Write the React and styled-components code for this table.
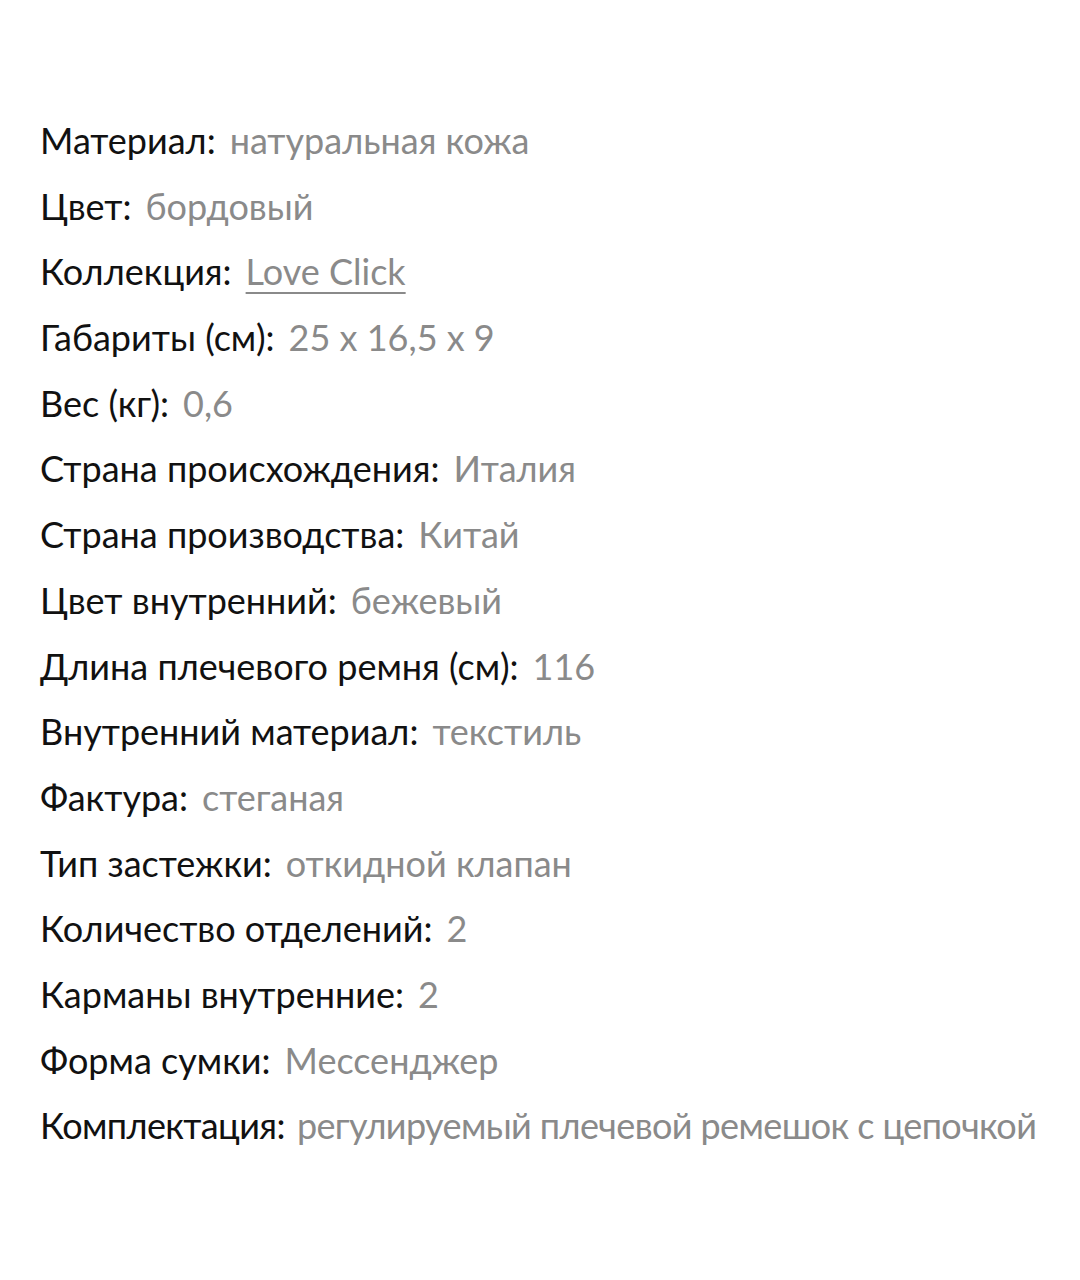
import React from "react";
import styled, { createGlobalStyle } from "styled-components";

const GlobalStyle = createGlobalStyle`
  body {
    margin: 0;
    background: #fff;
    font-family: "Lato", "Noto Sans", sans-serif;
  }
`;

const specs = [
  ["Материал", "натуральная кожа"],
  ["Цвет", "бордовый"],
  ["Коллекция", "Love Click", true],
  ["Габариты (см)", "25 x 16,5 x 9"],
  ["Вес (кг)", "0,6"],
  ["Страна происхождения", "Италия"],
  ["Страна производства", "Китай"],
  ["Цвет внутренний", "бежевый"],
  ["Длина плечевого ремня (см)", "116"],
  ["Внутренний материал", "текстиль"],
  ["Фактура", "стеганая"],
  ["Тип застежки", "откидной клапан"],
  ["Количество отделений", "2"],
  ["Карманы внутренние", "2"],
  ["Форма сумки", "Мессенджер"],
  ["Комплектация", "регулируемый плечевой ремешок с цепочкой", false, true],
];

const App = () => {
  return (
    <Wrapper>
      <GlobalStyle />
      <List>
        {specs.map(([label, value, link, tight]) => (
          <Row key={label} $tight={tight}>
            <Label>{label}:</Label>
            {link ? <Link href="#">{value}</Link> : <Value>{value}</Value>}
          </Row>
        ))}
      </List>
    </Wrapper>
  );
};

const Wrapper = styled.main`
  padding: 108px 40px 0 40px;
  height: 1280px;
  box-sizing: border-box;
`;

const List = styled.div`
  display: flex;
  flex-direction: column;
`;

const Row = styled.div`
  display: flex;
  align-items: baseline;
  gap: ${(p) => (p.$tight ? "12px" : "14px")};
  font-size: 36px;
  line-height: 65.7px;
  height: 65.7px;
  white-space: nowrap;
  letter-spacing: ${(p) => (p.$tight ? "-0.6px" : "0")};
`;

const Label = styled.span`
  color: #111;
`;

const Value = styled.span`
  color: #8a8a8a;
`;

const Link = styled.a`
  color: #8a8a8a;
  text-decoration: underline;
  text-underline-offset: 7px;
  text-decoration-thickness: 2px;
`;

export default App;
